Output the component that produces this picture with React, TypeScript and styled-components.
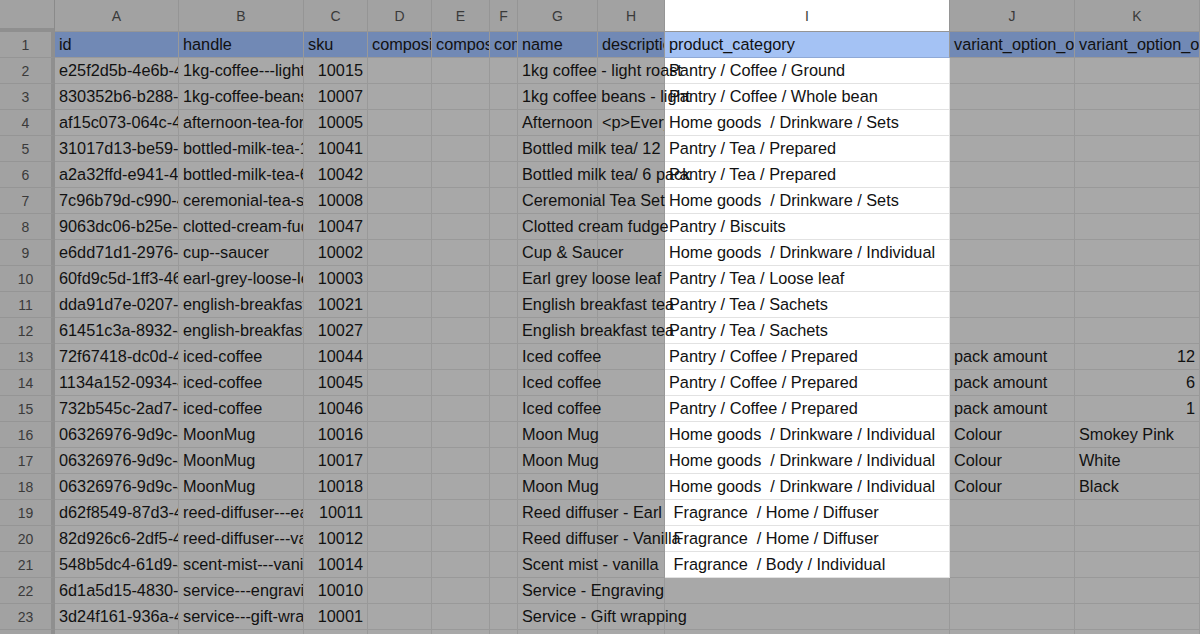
import React from "react";
import styled, { createGlobalStyle } from "styled-components";

const Global = createGlobalStyle`
  html, body { margin: 0; padding: 0; background: #a8a8a8; overflow: hidden; }
  body { font-family: "Liberation Sans", Arial, sans-serif; }
`;

const widths = [55, 124, 125, 64, 64, 58, 28, 80, 67, 285, 125, 125];
const letters = ["", "A", "B", "C", "D", "E", "F", "G", "H", "I", "J", "K"];

const Grid = styled.div`
  display: grid;
  grid-template-columns: ${widths.map((w) => w + "px").join(" ")};
  grid-template-rows: 32px repeat(24, 26px);
  width: 1200px;
  height: 634px;
  overflow: hidden;
`;

const ColHead = styled.div<{ $hi?: boolean; $corner?: boolean }>`
  background: ${(p) => (p.$hi ? "#ffffff" : "#a2a2a2")};
  border-right: 1px solid ${(p) => (p.$corner ? "#8a8a8a" : "#959595")};
  border-bottom: ${(p) => (p.$corner ? "4px solid #8f8f8f" : "1px solid #959595")};
  color: #3a3a3a;
  font-size: 14px;
  display: flex;
  align-items: center;
  justify-content: center;
  box-sizing: border-box;
`;

const RowHead = styled.div`
  background: #a2a2a2;
  border-right: 4px solid #8f8f8f;
  border-bottom: 1px solid #959595;
  color: #3a3a3a;
  font-size: 14px;
  display: flex;
  align-items: center;
  justify-content: center;
  box-sizing: border-box;
`;

const Cell = styled.div<{ $hi?: boolean; $head?: boolean; $right?: boolean; $spill?: boolean }>`
  position: relative;
  z-index: ${(p) => (p.$spill ? 1 : 0)};
  background: ${(p) =>
    p.$head ? (p.$hi ? "#a4c2f4" : "#7189b5") : p.$hi ? "#ffffff" : "#a8a8a8"};
  border-right: 1px solid ${(p) => (p.$hi && !p.$head ? "#e2e2e2" : "#999999")};
  border-bottom: 1px solid ${(p) => (p.$hi ? (p.$head ? "#8fa9d6" : "#e2e2e2") : "#999999")};
  color: #111;
  font-size: 16.3px;
  white-space: pre;
  overflow: ${(p) => (p.$spill ? "visible" : "hidden")};
  padding: 0 4px;
  display: flex;
  align-items: flex-end;
  justify-content: ${(p) => (p.$right ? "flex-end" : "flex-start")};
  padding-bottom: 4px;
  box-sizing: border-box;
  line-height: 18px;
`;

const header = ["id", "handle", "sku", "composite_sku", "composite_quantity", "composite_x", "name", "description", "product_category", "variant_option_one_name", "variant_option_one_value"];

const rows: string[][] = [
  ["e25f2d5b-4e6b-4a", "1kg-coffee---light", "10015", "", "", "", "1kg coffee - light roast", "", "Pantry / Coffee / Ground", "", ""],
  ["830352b6-b288-4", "1kg-coffee-beans", "10007", "", "", "", "1kg coffee beans - light", "", "Pantry / Coffee / Whole bean", "", ""],
  ["af15c073-064c-4a", "afternoon-tea-for", "10005", "", "", "", "Afternoon tea", "<p>Every", "Home goods  / Drinkware / Sets", "", ""],
  ["31017d13-be59-4", "bottled-milk-tea-1", "10041", "", "", "", "Bottled milk tea/ 12", "", "Pantry / Tea / Prepared", "", ""],
  ["a2a32ffd-e941-4", "bottled-milk-tea-6", "10042", "", "", "", "Bottled milk tea/ 6 pack", "", "Pantry / Tea / Prepared", "", ""],
  ["7c96b79d-c990-4", "ceremonial-tea-set", "10008", "", "", "", "Ceremonial Tea Set", "", "Home goods  / Drinkware / Sets", "", ""],
  ["9063dc06-b25e-4", "clotted-cream-fudge", "10047", "", "", "", "Clotted cream fudge", "", "Pantry / Biscuits", "", ""],
  ["e6dd71d1-2976-4", "cup--saucer", "10002", "", "", "", "Cup & Saucer", "", "Home goods  / Drinkware / Individual", "", ""],
  ["60fd9c5d-1ff3-46", "earl-grey-loose-leaf", "10003", "", "", "", "Earl grey loose leaf", "", "Pantry / Tea / Loose leaf", "", ""],
  ["dda91d7e-0207-4", "english-breakfast", "10021", "", "", "", "English breakfast tea", "", "Pantry / Tea / Sachets", "", ""],
  ["61451c3a-8932-4", "english-breakfast", "10027", "", "", "", "English breakfast tea", "", "Pantry / Tea / Sachets", "", ""],
  ["72f67418-dc0d-4", "iced-coffee", "10044", "", "", "", "Iced coffee", "", "Pantry / Coffee / Prepared", "pack amount", "12"],
  ["1134a152-0934-4", "iced-coffee", "10045", "", "", "", "Iced coffee", "", "Pantry / Coffee / Prepared", "pack amount", "6"],
  ["732b545c-2ad7-4", "iced-coffee", "10046", "", "", "", "Iced coffee", "", "Pantry / Coffee / Prepared", "pack amount", "1"],
  ["06326976-9d9c-4", "MoonMug", "10016", "", "", "", "Moon Mug", "", "Home goods  / Drinkware / Individual", "Colour", "Smokey Pink"],
  ["06326976-9d9c-4", "MoonMug", "10017", "", "", "", "Moon Mug", "", "Home goods  / Drinkware / Individual", "Colour", "White"],
  ["06326976-9d9c-4", "MoonMug", "10018", "", "", "", "Moon Mug", "", "Home goods  / Drinkware / Individual", "Colour", "Black"],
  ["d62f8549-87d3-4", "reed-diffuser---earl", "10011", "", "", "", "Reed diffuser - Earl", "", " Fragrance  / Home / Diffuser", "", ""],
  ["82d926c6-2df5-4", "reed-diffuser---van", "10012", "", "", "", "Reed diffuser - Vanilla", "", " Fragrance  / Home / Diffuser", "", ""],
  ["548b5dc4-61d9-4", "scent-mist---vanilla", "10014", "", "", "", "Scent mist - vanilla", "", " Fragrance  / Body / Individual", "", ""],
  ["6d1a5d15-4830-4", "service---engraving", "10010", "", "", "", "Service - Engraving", "", "", "", ""],
  ["3d24f161-936a-4", "service---gift-wrap", "10001", "", "", "", "Service - Gift wrapping", "", "", "", ""],
  ["", "", "", "", "", "", "", "", "", "", ""],
];

const HI = 8;
const LAST_HI_ROW = 19;

function renderRow(vals: string[], head: boolean, key: number, hiRow: boolean) {
  return vals.map((v, i) => {
    const next = vals[i + 1];
    const spill = !head && v !== "" && i + 1 < vals.length && next === "" && i < HI && (i + 1 !== HI || !hiRow);
    return (
      <Cell
        key={`${key}-${i}`}
        $head={head}
        $hi={i === HI && hiRow}
        $right={!head && (i === 2 || i === 10) && /^\d+$/.test(v)}
        $spill={spill}
      >
        {v}
      </Cell>
    );
  });
}

export default function App() {
  return (
    <>
      <Global />
      <Grid>
        {letters.map((l, i) => (
          <ColHead key={"c" + i} $corner={i === 0} $hi={i === HI + 1}>
            {l}
          </ColHead>
        ))}
        <RowHead>1</RowHead>
        {renderRow(header, true, 1, true)}
        {rows.map((r, ri) => (
          <React.Fragment key={ri}>
            <RowHead>{ri + 2}</RowHead>
            {renderRow(r, false, ri + 2, ri <= LAST_HI_ROW)}
          </React.Fragment>
        ))}
      </Grid>
    </>
  );
}
